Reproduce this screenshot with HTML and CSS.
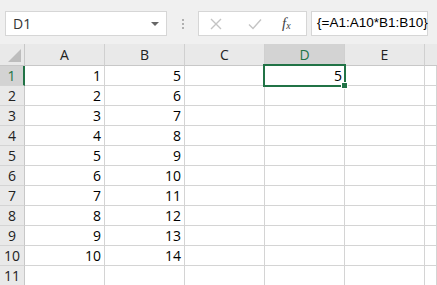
FILE: index.html
```html
<!DOCTYPE html>
<html lang="en">
<head>
  <meta charset="UTF-8">
  <title>Sheet</title>
  <link rel="stylesheet" href="styles.css">
</head>
<body>

<div class="formula-bar">
  <div class="name-box">
    <span>D1</span>
    <span class="caret"></span>
  </div>
  <div class="grip">
    <i></i><i></i><i></i>
  </div>
  <div class="buttons">
    <svg class="btn" width="12" height="12" viewBox="0 0 12 12"><path d="M1 1L11 11M11 1L1 11" stroke="#c4c4c4" stroke-width="1.4" fill="none"/></svg>
    <svg class="btn" width="14" height="12" viewBox="0 0 14 12"><path d="M1 6.5L5 10.5L13 1.5" stroke="#c4c4c4" stroke-width="1.4" fill="none"/></svg>
    <span class="fx">f<sub>x</sub></span>
  </div>
  <div class="formula">{=A1:A10*B1:B10}</div>
</div>

<div class="sheet">
  <div class="corner"><span class="tri"></span></div>
  <div class="col-head">A</div>
  <div class="col-head">B</div>
  <div class="col-head">C</div>
  <div class="col-head sel">D</div>
  <div class="col-head">E</div>
  <div class="col-head last"></div>

  <div class="row-head sel">1</div><div class="cell">1</div><div class="cell">5</div><div class="cell"></div><div class="cell active">5<span class="handle"></span></div><div class="cell"></div><div class="cell"></div>
  <div class="row-head">2</div><div class="cell">2</div><div class="cell">6</div><div class="cell"></div><div class="cell"></div><div class="cell"></div><div class="cell"></div>
  <div class="row-head">3</div><div class="cell">3</div><div class="cell">7</div><div class="cell"></div><div class="cell"></div><div class="cell"></div><div class="cell"></div>
  <div class="row-head">4</div><div class="cell">4</div><div class="cell">8</div><div class="cell"></div><div class="cell"></div><div class="cell"></div><div class="cell"></div>
  <div class="row-head">5</div><div class="cell">5</div><div class="cell">9</div><div class="cell"></div><div class="cell"></div><div class="cell"></div><div class="cell"></div>
  <div class="row-head">6</div><div class="cell">6</div><div class="cell">10</div><div class="cell"></div><div class="cell"></div><div class="cell"></div><div class="cell"></div>
  <div class="row-head">7</div><div class="cell">7</div><div class="cell">11</div><div class="cell"></div><div class="cell"></div><div class="cell"></div><div class="cell"></div>
  <div class="row-head">8</div><div class="cell">8</div><div class="cell">12</div><div class="cell"></div><div class="cell"></div><div class="cell"></div><div class="cell"></div>
  <div class="row-head">9</div><div class="cell">9</div><div class="cell">13</div><div class="cell"></div><div class="cell"></div><div class="cell"></div><div class="cell"></div>
  <div class="row-head">10</div><div class="cell">10</div><div class="cell">14</div><div class="cell"></div><div class="cell"></div><div class="cell"></div><div class="cell"></div>
  <div class="row-head">11</div><div class="cell"></div><div class="cell"></div><div class="cell"></div><div class="cell"></div><div class="cell"></div><div class="cell"></div>
</div>

</body>
</html>
```

FILE: styles.css
```css
body {
  margin: 0;
  width: 437px;
  height: 285px;
  overflow: hidden;
  background-color: #fff;
  font-family: "Open Sans", "Liberation Sans", sans-serif;
  color: #000;
}

/* top bar with name box and formula */
.formula-bar {
  display: flex;
  align-items: center;
  height: 44px;
  padding: 0 0 0 5px;
  background-color: #f0f0f0;
  box-sizing: border-box;
}

.name-box {
  width: 162px;
  height: 25px;
  margin-top: 3px;
  box-sizing: border-box;
  border: 1px solid #d6d6d6;
  background-color: #fff;
  display: flex;
  align-items: center;
  justify-content: space-between;
  padding: 0 7px 0 7px;
  font-size: 14px;
  color: #333;
}

.caret {
  width: 0;
  height: 0;
  border-left: 4px solid transparent;
  border-right: 4px solid transparent;
  border-top: 4px solid #666;
}

.grip {
  width: 31px;
  margin-top: 3px;
  display: flex;
  flex-direction: column;
  align-items: center;
  gap: 2px;
}

.grip i {
  width: 2px;
  height: 2px;
  background-color: #b0b0b0;
}

.buttons {
  width: 109px;
  height: 25px;
  margin-top: 3px;
  box-sizing: border-box;
  border: 1px solid #d6d6d6;
  background-color: #fff;
  display: flex;
  align-items: center;
  padding-left: 11px;
}

.btn {
  margin-right: 26px;
}

.buttons .btn + .btn {
  margin-right: 20px;
}

.fx {
  font-family: "Liberation Serif", serif;
  font-style: italic;
  font-size: 15px;
  color: #444;
}

.fx sub {
  font-size: 10px;
  vertical-align: -1px;
}

.formula {
  width: 117px;
  height: 25px;
  margin-top: 3px;
  margin-left: 4px;
  box-sizing: border-box;
  border: 1px solid #d6d6d6;
  background-color: #fff;
  font-family: "Liberation Sans", sans-serif;
  font-size: 13.5px;
  line-height: 22px;
  padding-left: 5px;
  white-space: nowrap;
}

/* grid */
.sheet {
  display: grid;
  grid-template-columns: 25px repeat(5, 80px) 12px;
  grid-template-rows: 22px repeat(11, 20px);
  font-size: 14px;
}

.sheet > div {
  box-sizing: border-box;
}

.corner {
  background-color: #e9e9e9;
  border-right: 1px solid #c8c8c8;
  border-bottom: 1px solid #c8c8c8;
  position: relative;
}

.tri {
  position: absolute;
  right: 3px;
  bottom: 3px;
  width: 0;
  height: 0;
  border-left: 13px solid transparent;
  border-bottom: 13px solid #bdbdbd;
}

.col-head {
  background-color: #e9e9e9;
  border-right: 1px solid #d0d0d0;
  border-bottom: 1px solid #c8c8c8;
  text-align: center;
  line-height: 22px;
  color: #222;
}

.col-head.sel {
  background-color: #d3d3d3;
  color: #217346;
  border-bottom: 2px solid #217346;
}

.col-head.last {
  border-right: none;
}

.row-head {
  background-color: #e9e9e9;
  border-right: 1px solid #c8c8c8;
  border-bottom: 1px solid #d4d4d4;
  text-align: center;
  line-height: 20px;
  color: #222;
}

.row-head.sel {
  background-color: #d3d3d3;
  color: #217346;
  border-right: 2px solid #217346;
}

.cell {
  border-right: 1px solid #d4d4d4;
  border-bottom: 1px solid #d4d4d4;
  text-align: right;
  padding-right: 3px;
  line-height: 20px;
}

.cell.active {
  position: relative;
  border: 2px solid #217346;
  margin: -2px -1px -1px -2px;
  line-height: 20px;
  padding-right: 2px;
}

.handle {
  position: absolute;
  right: -4px;
  bottom: -4px;
  width: 5px;
  height: 5px;
  background-color: #217346;
  border: 1px solid #fff;
}
```
